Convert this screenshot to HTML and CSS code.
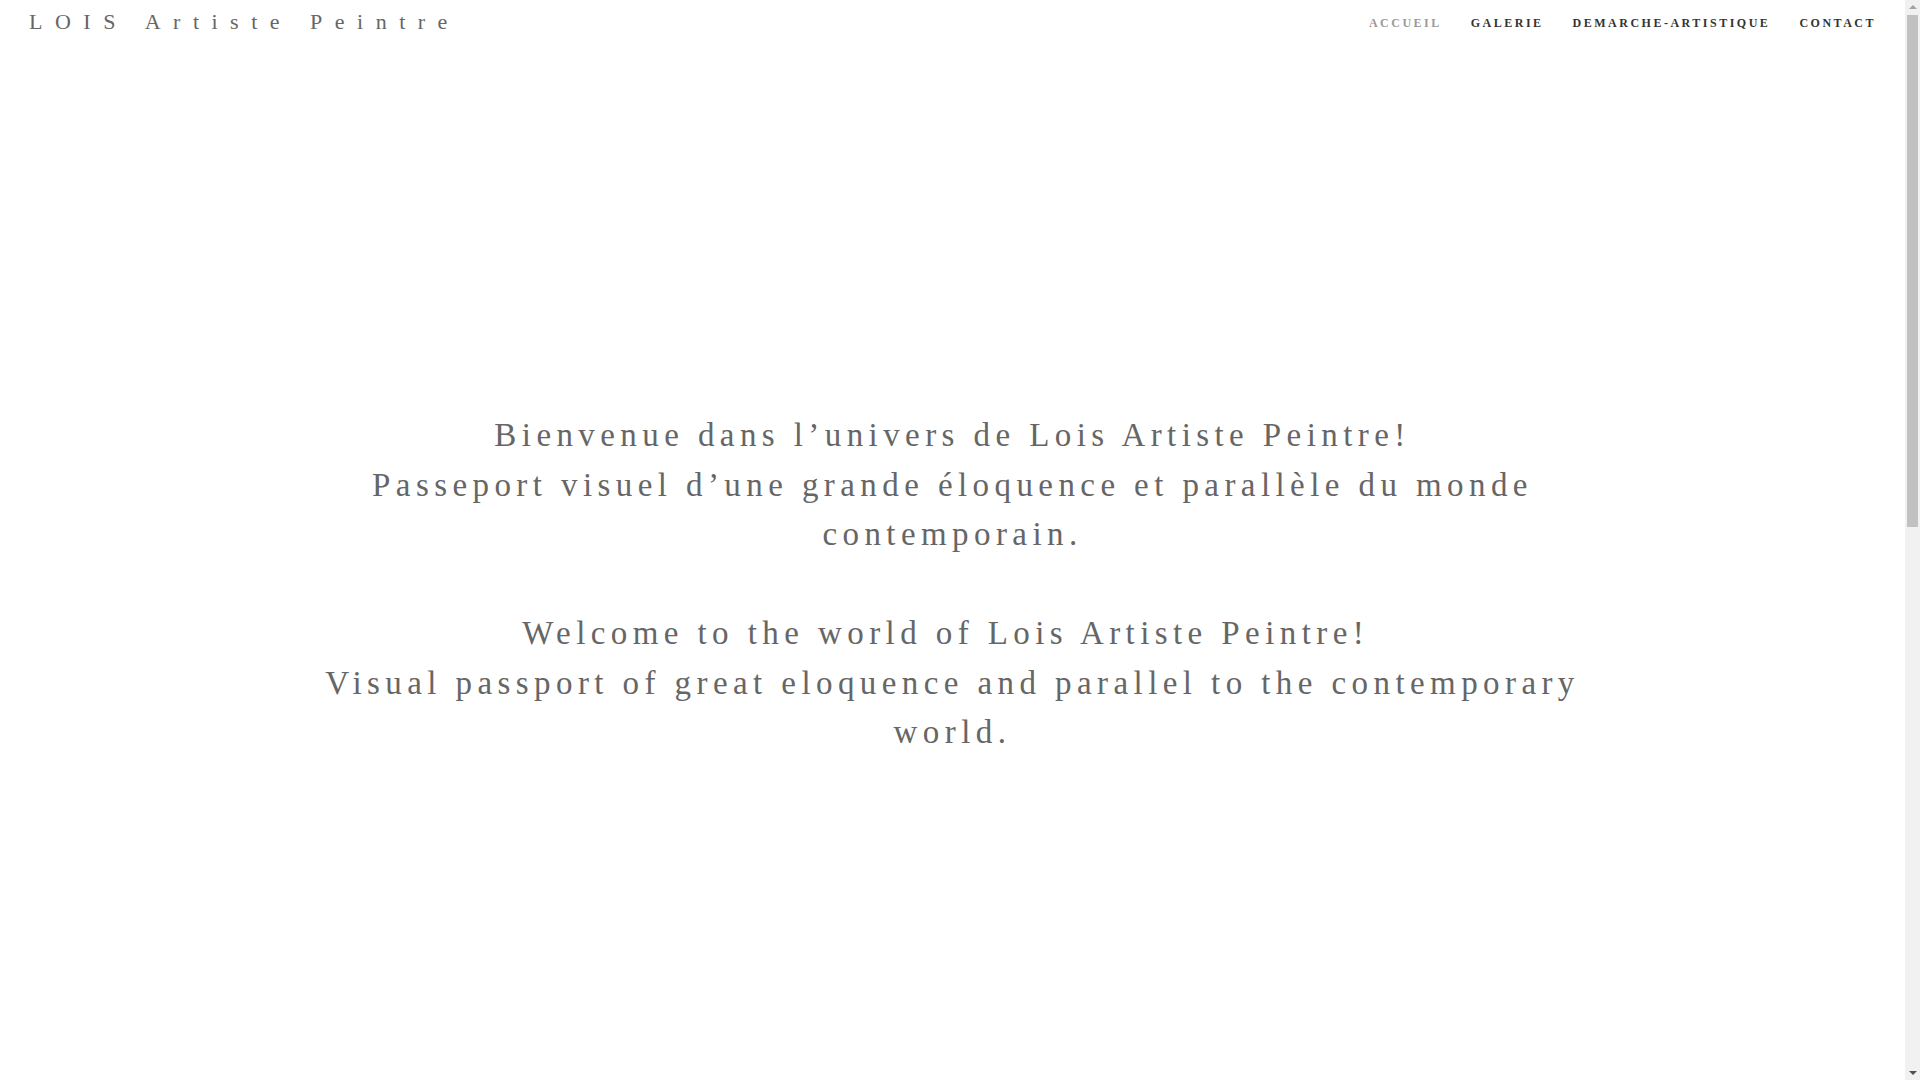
FILE: index.html
```html
<!DOCTYPE html>
<html lang="fr">
<head>
<meta charset="utf-8">
<title>LOIS Artiste Peintre</title>
<link rel="stylesheet" href="styles.css">
</head>
<body>
<header class="site-header">
  <div class="logo">LOIS Artiste Peintre</div>
  <nav class="main-nav">
    <a class="nav-item active" href="#">ACCUEIL</a>
    <a class="nav-item" href="#">GALERIE</a>
    <a class="nav-item" href="#">DEMARCHE-ARTISTIQUE</a>
    <a class="nav-item" href="#">CONTACT</a>
  </nav>
</header>
<main class="hero">
  <div class="intro">
    <p class="para">Bienvenue dans l’univers de Lois Artiste Peintre!<br>Passeport visuel d’une grande éloquence et parallèle du monde contemporain.</p>
    <p class="para">Welcome to the world of Lois Artiste Peintre!&nbsp;<br>Visual passport of great eloquence and parallel to the contemporary world.</p>
  </div>
</main>
<div class="fake-scrollbar" aria-hidden="true">
  <span class="sb-arrow sb-up"></span>
  <span class="sb-thumb"></span>
  <span class="sb-arrow sb-down"></span>
</div>
</body>
</html>
```

FILE: styles.css
```css
html, body {
  margin: 0;
  padding: 0;
  background: #ffffff;
}
body {
  font-family: "Liberation Serif", "Times New Roman", serif;
  color: #666666;
  padding-right: 15px;
}
.site-header {
  display: flex;
  align-items: center;
  justify-content: space-between;
  height: 44px;
  padding: 0 29px 0 29px;
}
.logo {
  font-size: 22px;
  letter-spacing: 12.5px;
  color: #666666;
  line-height: 1;
}
.main-nav {
  display: flex;
  gap: 29px;
  align-items: center;
  padding-top: 2px;
}
.nav-item {
  font-size: 12px;
  font-weight: bold;
  letter-spacing: 2.5px;
  color: #333333;
  text-decoration: none;
}
.nav-item.active {
  color: #999999;
}
.hero {
  padding-top: 367px;
  height: 1790px;
}
.intro {
  width: 1300px;
  margin: 0 auto;
  text-align: center;
}
.para {
  margin: 0 0 49.5px;
  font-size: 33px;
  line-height: 49.5px;
  letter-spacing: 5.42px;
  color: #666666;
}
.fake-scrollbar {
  position: fixed;
  top: 0;
  right: 0;
  width: 15px;
  height: 100vh;
  background: #f1f1f1;
  display: flex;
  flex-direction: column;
  align-items: center;
}
.sb-arrow {
  width: 0;
  height: 0;
  border-left: 4px solid transparent;
  border-right: 4px solid transparent;
}
.sb-up {
  margin-top: 5px;
  border-bottom: 4px solid #a3a3a3;
}
.sb-down {
  margin-top: auto;
  margin-bottom: 5px;
  border-top: 4px solid #505050;
}
.sb-thumb {
  margin-top: 6px;
  width: 11px;
  height: 512px;
  background: #c1c1c1;
}
```
